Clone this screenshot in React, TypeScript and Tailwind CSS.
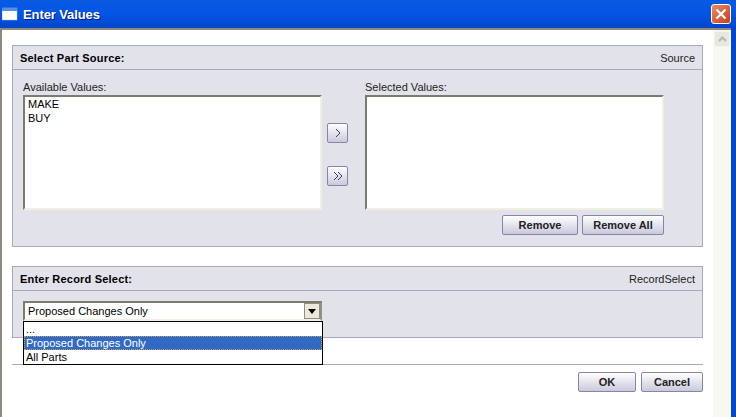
import React from "react";

function ListBox({ items }: { items: string[] }) {
  return (
    <div className="w-[299px] h-[115px] bg-white border-2 border-t-[#7b7b6f] border-l-[#7b7b6f] border-r-[#f1efe2] border-b-[#f1efe2] px-[3px] text-[11px] leading-[14px] text-black">
      {items.map((i) => (
        <div key={i}>{i}</div>
      ))}
    </div>
  );
}

function Btn({ className, children }: { className: string; children: React.ReactNode }) {
  return (
    <div className={"flex items-center justify-center rounded-[2px] border border-[#8585a8] bg-gradient-to-b from-white to-[#c9c9dc] " + className}>
      {children}
    </div>
  );
}

function PanelHead({ title, right }: { title: string; right: string }) {
  return (
    <div className="h-[24px] flex items-center justify-between pl-[7px] pr-[7px] pt-px border-b border-[#a8a8c0]">
      <span className="text-[11px] font-bold text-black tracking-[0.2px]">{title}</span>
      <span className="text-[11px] text-[#222]">{right}</span>
    </div>
  );
}

export default function App() {
  return (
    <div className="w-[736px] h-[417px] overflow-hidden flex flex-col font-['Liberation_Sans','DejaVu_Sans',sans-serif] bg-white">
      <div className="h-[28px] shrink-0 flex items-center bg-gradient-to-b from-[#0a5ae0] via-[#0355e6] to-[#0345c8] pl-[2px] pr-[5px]">
        <svg width="16" height="14" viewBox="0 0 16 14" className="mr-[5px]">
          <rect x="0" y="1" width="15" height="12" fill="#fff" stroke="#9fc0ee" strokeWidth="0.5" />
          <rect x="0" y="1" width="15" height="3" fill="#5a8fe0" />
        </svg>
        <span className="text-[13px] font-bold text-white pt-px [text-shadow:1px_1px_0_#00208a] tracking-[-0.1px]">Enter Values</span>
        <div className="ml-auto w-[20px] h-[20px] rounded-[3px] border border-white bg-gradient-to-br from-[#e88a66] to-[#c93a14] flex items-center justify-center">
          <svg width="12" height="12" viewBox="0 0 12 12">
            <path d="M1.5 1.5L10.5 10.5M10.5 1.5L1.5 10.5" stroke="#fff" strokeWidth="2.2" />
          </svg>
        </div>
      </div>
      <div className="flex-1 flex min-h-0 bg-[#0346d6]">
        <div className="flex-1 flex min-h-0 bg-white">
          <div className="w-[2px] bg-[#8a8a7e] shrink-0" />
          <div className="flex-1 flex flex-col min-w-0 border-t-2 border-[#8a8a7e] pl-[10px] pr-[10px] pt-[15px]">
            <div className="h-[202px] border border-[#a8a8c0] bg-[#e2e2ea] shrink-0">
              <PanelHead title="Select Part Source:" right="Source" />
              <div className="flex pl-[10px] pt-[10px]">
                <div>
                  <div className="text-[11px] leading-[14px] text-[#222] mb-px">Available Values:</div>
                  <ListBox items={["MAKE", "BUY"]} />
                </div>
                <div className="w-[44px] flex flex-col pl-[5px] pt-[43px] gap-[23px]">
                  <Btn className="w-[21px] h-[20px]">
                    <svg width="8" height="10" viewBox="0 0 8 10"><path d="M2 1L6 5L2 9" fill="none" stroke="#3b3b6b" /></svg>
                  </Btn>
                  <Btn className="w-[21px] h-[20px]">
                    <svg width="12" height="10" viewBox="0 0 12 10"><path d="M2 1L6 5L2 9M6 1L10 5L6 9" fill="none" stroke="#3b3b6b" /></svg>
                  </Btn>
                </div>
                <div className="-ml-px">
                  <div className="text-[11px] leading-[14px] text-[#222] mb-px">Selected Values:</div>
                  <ListBox items={[]} />
                </div>
              </div>
              <div className="flex justify-end gap-[4px] pr-[38px] pt-[5px]">
                <Btn className="w-[76px] h-[20px] pt-px text-[11px] font-bold text-[#222]">Remove</Btn>
                <Btn className="w-[82px] h-[20px] pt-px text-[11px] font-bold text-[#222]">Remove All</Btn>
              </div>
            </div>
            <div className="relative h-[72px] mt-[19px] border border-[#a8a8c0] bg-[#e2e2ea] shrink-0">
              <PanelHead title="Enter Record Select:" right="RecordSelect" />
              <div className="pl-[10px] pt-[10px]">
                <div className="w-[299px] h-[20px] bg-white border-2 border-t-[#7b7b6f] border-l-[#7b7b6f] border-r-[#8f8f83] border-b-[#f1efe2] flex items-center pl-[3px] text-[11px] text-black">
                  <span>Proposed Changes Only</span>
                  <div className="ml-auto w-[16px] h-[16px] bg-[#ece9d8] border border-[#8f8f83] flex items-center justify-center">
                    <svg width="8" height="5" viewBox="0 0 8 5"><path d="M0 0H8L4 5Z" fill="#000" /></svg>
                  </div>
                </div>
              </div>
              <div className="absolute left-[10px] top-[54px] w-[300px] h-[44px] bg-white border border-black text-[11px] leading-[14px] text-black z-10">
                <div className="h-[14px] pl-[2px]">...</div>
                <div className="h-[14px] pl-[2px] bg-[#316ac5] text-white outline-1 outline-dotted outline-offset-[-1px] outline-[#c9a050]">Proposed Changes Only</div>
                <div className="h-[14px] pl-[2px]">All Parts</div>
              </div>
            </div>
            <div className="mt-[26px] border-t border-[#a8a8c0] flex justify-end gap-[5px] pt-[7px]">
              <Btn className="w-[58px] h-[20px] text-[11px] font-bold text-[#222]">OK</Btn>
              <Btn className="w-[62px] h-[20px] text-[11px] font-bold text-[#222]">Cancel</Btn>
            </div>
          </div>
          <div className="w-[18px] shrink-0 bg-[#f8f7f0] border-t-2 border-[#8a8a7e] pl-px pr-px pt-px">
            <div className="h-[16px] bg-[#e9e8df] border border-[#f5f4ec] flex items-center justify-center">
              <svg width="9" height="6" viewBox="0 0 9 6"><path d="M1 5L4.5 1.5L8 5" fill="none" stroke="#b8b8ae" strokeWidth="2" /></svg>
            </div>
          </div>
        </div>
        <div className="w-[5px] shrink-0" />
      </div>
    </div>
  );
}
